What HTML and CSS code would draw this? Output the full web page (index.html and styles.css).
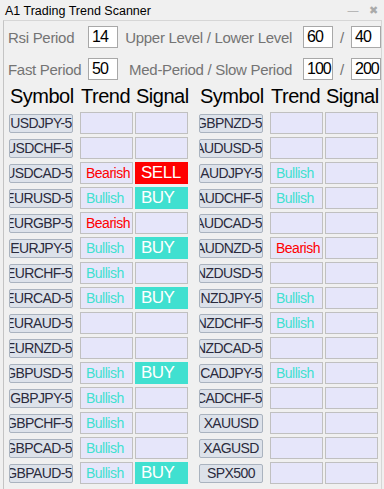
FILE: index.html
```html
<!DOCTYPE html>
<html lang="en">
<head>
  <meta charset="UTF-8" />
  <title>A1 Trading Trend Scanner</title>
  <link rel="stylesheet" href="styles.css">
</head>
<body>
  <div class="titlebar">
    <span class="title">A1 Trading Trend Scanner</span>
    <span class="win-btn min">&#8212;</span>
    <span class="win-btn close">&#10006;</span>
  </div>

  <div class="panel">
    <div class="params">
      <span class="plabel">Rsi Period</span>
      <span class="pbox">14</span>
      <span class="plabel wide">Upper Level / Lower Level</span>
      <span class="pbox">60</span>
      <span class="slash">/</span>
      <span class="pbox">40</span>
    </div>
    <div class="params">
      <span class="plabel">Fast Period</span>
      <span class="pbox">50</span>
      <span class="plabel wide">Med-Period / Slow Period</span>
      <span class="pbox">100</span>
      <span class="slash">/</span>
      <span class="pbox">200</span>
    </div>

    <div class="row head">
      <span class="sym">Symbol</span><span class="cell">Trend</span><span class="cell">Signal</span>
      <span class="sym">Symbol</span><span class="cell">Trend</span><span class="cell">Signal</span>
    </div>

    <div class="row">
      <span class="sym"><b>USDJPY-5</b></span><span class="cell"></span><span class="cell"></span>
      <span class="sym"><b>GBPNZD-5</b></span><span class="cell"></span><span class="cell"></span>
    </div>
    <div class="row">
      <span class="sym"><b>USDCHF-5</b></span><span class="cell"></span><span class="cell"></span>
      <span class="sym"><b>AUDUSD-5</b></span><span class="cell"></span><span class="cell"></span>
    </div>
    <div class="row">
      <span class="sym"><b>USDCAD-5</b></span><span class="cell bear">Bearish</span><span class="cell sell">SELL</span>
      <span class="sym"><b>AUDJPY-5</b></span><span class="cell bull">Bullish</span><span class="cell"></span>
    </div>
    <div class="row">
      <span class="sym"><b>EURUSD-5</b></span><span class="cell bull">Bullish</span><span class="cell buy">BUY</span>
      <span class="sym"><b>AUDCHF-5</b></span><span class="cell bull">Bullish</span><span class="cell"></span>
    </div>
    <div class="row">
      <span class="sym"><b>EURGBP-5</b></span><span class="cell bear">Bearish</span><span class="cell"></span>
      <span class="sym"><b>AUDCAD-5</b></span><span class="cell"></span><span class="cell"></span>
    </div>
    <div class="row">
      <span class="sym"><b>EURJPY-5</b></span><span class="cell bull">Bullish</span><span class="cell buy">BUY</span>
      <span class="sym"><b>AUDNZD-5</b></span><span class="cell bear">Bearish</span><span class="cell"></span>
    </div>
    <div class="row">
      <span class="sym"><b>EURCHF-5</b></span><span class="cell bull">Bullish</span><span class="cell"></span>
      <span class="sym"><b>NZDUSD-5</b></span><span class="cell"></span><span class="cell"></span>
    </div>
    <div class="row">
      <span class="sym"><b>EURCAD-5</b></span><span class="cell bull">Bullish</span><span class="cell buy">BUY</span>
      <span class="sym"><b>NZDJPY-5</b></span><span class="cell bull">Bullish</span><span class="cell"></span>
    </div>
    <div class="row">
      <span class="sym"><b>EURAUD-5</b></span><span class="cell"></span><span class="cell"></span>
      <span class="sym"><b>NZDCHF-5</b></span><span class="cell bull">Bullish</span><span class="cell"></span>
    </div>
    <div class="row">
      <span class="sym"><b>EURNZD-5</b></span><span class="cell"></span><span class="cell"></span>
      <span class="sym"><b>NZDCAD-5</b></span><span class="cell"></span><span class="cell"></span>
    </div>
    <div class="row">
      <span class="sym"><b>GBPUSD-5</b></span><span class="cell bull">Bullish</span><span class="cell buy">BUY</span>
      <span class="sym"><b>CADJPY-5</b></span><span class="cell bull">Bullish</span><span class="cell"></span>
    </div>
    <div class="row">
      <span class="sym"><b>GBPJPY-5</b></span><span class="cell bull">Bullish</span><span class="cell"></span>
      <span class="sym"><b>CADCHF-5</b></span><span class="cell"></span><span class="cell"></span>
    </div>
    <div class="row">
      <span class="sym"><b>GBPCHF-5</b></span><span class="cell bull">Bullish</span><span class="cell"></span>
      <span class="sym"><b>XAUUSD</b></span><span class="cell"></span><span class="cell"></span>
    </div>
    <div class="row">
      <span class="sym"><b>GBPCAD-5</b></span><span class="cell bull">Bullish</span><span class="cell"></span>
      <span class="sym"><b>XAGUSD</b></span><span class="cell"></span><span class="cell"></span>
    </div>
    <div class="row">
      <span class="sym"><b>GBPAUD-5</b></span><span class="cell bull">Bullish</span><span class="cell buy">BUY</span>
      <span class="sym"><b>SPX500</b></span><span class="cell"></span><span class="cell"></span>
    </div>
  </div>
</body>
</html>
```

FILE: styles.css
```css
html, body {
  margin: 0;
  padding: 0;
  height: 100%;
  overflow: hidden;
}

body {
  background: #f0f0f0;
  font-family: "Liberation Sans", Arial, sans-serif;
}

.titlebar {
  height: 20px;
  display: flex;
  align-items: center;
  padding-left: 5px;
  box-sizing: border-box;
}

.title {
  font-size: 12.5px;
  color: #000;
  flex: 1;
  padding-top: 1px;
}

.win-btn {
  color: #aaa;
  font-size: 11px;
  width: 20px;
  text-align: center;
}

.close {
  margin-right: 1px;
}

.panel {
  margin-left: 3px;
  margin-right: 2px;
  border-left: 1px solid #c4c4c4;
  border-top: 1px solid #d6d6d6;
  border-right: 1px solid #d6d6d6;
  height: 480px;
  padding-top: 5px;
  box-sizing: border-box;
}

.params {
  display: flex;
  align-items: center;
  height: 22px;
  margin-bottom: 10px;
  padding-left: 4px;
}

.plabel {
  width: 80px;
  font-size: 15px;
  letter-spacing: -0.3px;
  color: #747474;
}

.plabel.wide {
  flex: 1;
  width: auto;
  text-align: right;
  margin-right: 11px;
}

.pbox {
  width: 30px;
  height: 22px;
  box-sizing: border-box;
  background: #fff;
  border: 1px solid #a8a8a8;
  font-size: 16px;
  letter-spacing: -1px;
  line-height: 20px;
  padding-left: 3px;
  color: #000;
}

.slash {
  width: 18px;
  text-align: center;
  font-size: 15px;
  color: #747474;
}

.row {
  display: flex;
  align-items: center;
  height: 22px;
  margin-bottom: 3px;
  padding-left: 5px;
}

.row.head {
  height: 24px;
  margin-top: -6px;
  margin-bottom: 4px;
  font-size: 20px;
  letter-spacing: -0.5px;
  color: #000;
}

.sym {
  width: 64px;
  margin-right: 7px;
  flex-shrink: 0;
}

/* second group of columns */
.sym:nth-child(4) {
  margin-left: 9px;
}

.cell {
  width: 53px;
  margin-right: 2px;
  flex-shrink: 0;
}

.head .sym,
.head .cell {
  padding-left: 1px;
  box-sizing: border-box;
}

.row:not(.head) .sym {
  height: 19px;
  box-sizing: border-box;
  background: #dde2ea;
  border: 1px solid #aab3bf;
  border-radius: 2px;
  display: flex;
  direction: rtl; /* long names get clipped on the left */
  overflow: hidden;
  align-items: center;
}

.sym b {
  direction: ltr;
  margin: 0 auto;
  font-weight: normal;
  font-size: 14px;
  letter-spacing: -0.6px;
  color: #2b2b3d;
  white-space: nowrap;
}

.row:not(.head) .cell {
  height: 22px;
  box-sizing: border-box;
  background: #e6e6fa;
  border: 1px solid #c0c0c0;
  font-size: 14px;
  letter-spacing: -0.5px;
  line-height: 20px;
  padding-left: 5px;
  white-space: nowrap;
}

.row .cell.bull {
  color: #40e0d0;
}

.row .cell.bear {
  color: #ff0000;
}

.row .cell.sell {
  background: #ff0000;
  border-color: #ff0000;
  color: #fff;
  font-size: 17px;
}

.row .cell.buy {
  background: #40e0d0;
  border-color: #40e0d0;
  color: #fff;
  font-size: 17px;
}
```
